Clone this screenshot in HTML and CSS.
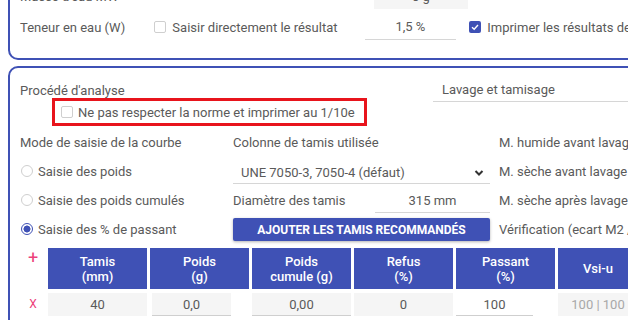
FILE: index.html
```html
<!DOCTYPE html>
<html lang="fr">
<head>
    <meta charset="UTF-8">
    <meta name="viewport" content="width=device-width, initial-scale=1.0">
    <title>Analyse granulométrique</title>
    <link rel="stylesheet" href="styles.css">
</head>
<body>
<div class="page">

    <!-- Teneur en eau -->
    <div class="card card-top">
        <div class="row-top row-first">
            <span class="top-label">Masse d'eau MW</span>
            <span class="top-gap"></span>
            <span class="field field-grey">0 g</span>
        </div>
        <div class="row-top">
            <span class="top-label">Teneur en eau (W)</span>
            <label class="check top-gap"><span class="box"></span>Saisir directement le résultat</label>
            <span class="field field-line">1,5 %</span>
            <label class="check check-print">
                <span class="box box-on">
                    <svg width="12" height="12" viewBox="0 0 12 12"><polyline points="3,6.2 5.2,8.3 9,4" fill="none" stroke="#fff" stroke-width="1.4"/></svg>
                </span>Imprimer les résultats de la teneur en eau
            </label>
        </div>
    </div>

    <!-- Procédé d'analyse -->
    <div class="card card-main">
        <div class="row-process">
            <span class="process-label">Procédé d'analyse</span>
            <span class="select select-wide">Lavage et tamisage</span>
        </div>

        <div class="highlight">
            <label class="check"><span class="box"></span>Ne pas respecter la norme et imprimer au 1/10e</label>
        </div>

        <div class="form-grid">
            <span>Mode de saisie de la courbe</span>
            <span>Colonne de tamis utilisée</span>
            <span class="side">M. humide avant lavage (M1)</span>

            <label class="radio"><span class="dot"></span>Saisie des poids</label>
            <span class="select select-col">
                UNE 7050-3, 7050-4 (défaut)
                <svg class="chevron" width="10" height="8" viewBox="0 0 10 8"><polyline points="1.5,2 5,5.5 8.5,2" fill="none" stroke="#333" stroke-width="2"/></svg>
            </span>
            <span class="side">M. sèche avant lavage (M2)</span>

            <label class="radio"><span class="dot"></span>Saisie des poids cumulés</label>
            <span class="diam">
                <span>Diamètre des tamis</span>
                <span class="field field-line field-diam">315 mm</span>
            </span>
            <span class="side">M. sèche après lavage (M3)</span>

            <label class="radio"><span class="dot dot-on"></span>Saisie des % de passant</label>
            <span class="btn-wrap"><button class="btn">AJOUTER LES TAMIS RECOMMANDÉS</button></span>
            <span class="side">Vérification (ecart M2 / M3)</span>
        </div>

        <!-- Tableau des tamis -->
        <div class="sieve-table">
            <span class="act act-add">+</span>
            <div class="th">Tamis<br>(mm)</div>
            <div class="th">Poids<br>(g)</div>
            <div class="th">Poids<br>cumule (g)</div>
            <div class="th">Refus<br>(%)</div>
            <div class="th">Passant<br>(%)</div>
            <div class="th">Vsi-u</div>

            <span class="act act-del">X</span>
            <div class="td td-grey">40</div>
            <div class="td"><span class="cell-input cell-narrow">0,0</span></div>
            <div class="td"><span class="cell-input">0,00</span></div>
            <div class="td td-grey">0</div>
            <div class="td"><span class="cell-input cell-white">100</span></div>
            <div class="td td-grey td-muted">100 | 100</div>
        </div>
    </div>

</div>
</body>
</html>
```

FILE: styles.css
```css
/* General */
* {
    margin: 0;
    padding: 0;
    box-sizing: border-box;
}
body {
    width: 628px;
    height: 320px;
    overflow: hidden;
    background: #fff;
    color: #5a5a5a;
    font-family: Roboto, "Liberation Sans", sans-serif;
    font-size: 13px;
}
.page {
    padding: 0 8px;
}

/* Cards */
.card {
    width: 720px;
    border: 2px solid #3f51b5;
    border-radius: 10px;
    white-space: nowrap;
}
.card-top {
    margin-top: -18px;
    padding: 0 0 18px 10px;
}
.card-main {
    margin-top: 6px;
    height: 300px;
    padding: 10px 0 0 10px;
}

/* Top card rows */
.row-top {
    display: flex;
    align-items: center;
    height: 26px;
}
.row-first {
    height: 25px;
    margin-bottom: 5px;
}
.top-label {
    width: 138px;
}
.top-gap {
    width: 216px;
}
.field {
    display: flex;
    align-items: center;
    justify-content: center;
    width: 94px;
    height: 100%;
}
.field-grey {
    background: #f5f5f5;
}
.field-line {
    border-bottom: 1px solid #d6d6d6;
}
.check-print {
    margin-left: 13px;
}

/* Checkboxes and radios */
.check,
.radio {
    display: flex;
    align-items: center;
    gap: 6px;
}
.box {
    display: inline-flex;
    width: 12px;
    height: 12px;
    border: 1px solid #cfcfcf;
    border-radius: 2px;
}
.box-on {
    border: none;
    background: #3f51b5;
}
.radio {
    margin-left: 1px;
    gap: 5px;
}
.dot {
    width: 12px;
    height: 12px;
    border: 1px solid #cfcfcf;
    border-radius: 50%;
}
.dot-on {
    border: 1.5px solid #3f51b5;
    background: radial-gradient(circle, #3f51b5 0 3.2px, #fff 3.8px);
}

/* Procédé row */
.row-process {
    display: flex;
    align-items: center;
    height: 24px;
}
.process-label {
    width: 423px;
}
.select {
    display: flex;
    align-items: center;
    height: 100%;
    border-bottom: 1px solid #d6d6d6;
}
.select-wide {
    width: 300px;
    padding-left: 9px;
}

/* Annotated row */
.highlight {
    display: flex;
    align-items: center;
    width: 315px;
    height: 28px;
    margin: -4px 0 0 32px;
    padding-left: 6px;
    border: 3px solid #e8141c;
}
.highlight .check {
    gap: 5px;
}

/* Form grid */
.form-grid {
    display: grid;
    grid-template-columns: 213px 257px 230px;
    grid-auto-rows: 28px;
    row-gap: 1px;
    margin-top: 2px;
    align-items: center;
}
.side {
    padding-left: 9px;
}
.select-col {
    position: relative;
    height: 24px;
    margin-top: 1px;
    padding: 2px 0 0 8px;
}
.chevron {
    position: absolute;
    right: 6px;
    top: 9px;
}
.diam {
    display: flex;
    align-items: center;
    justify-content: space-between;
    height: 100%;
}
.field-diam {
    width: 115px;
    height: 26px;
    padding-top: 1px;
}
.btn-wrap {
    display: flex;
    height: 100%;
    padding-top: 3px;
}
.btn {
    width: 257px;
    height: 23px;
    border: none;
    border-radius: 2px;
    background: #3f51b5;
    color: #fff;
    font-family: inherit;
    font-size: 12px;
    font-weight: 700;
    box-shadow: 0 1px 3px rgba(0, 0, 0, 0.3);
}

/* Sieve table */
.sieve-table {
    display: grid;
    grid-template-columns: 25px repeat(5, 99px) 80px;
    grid-template-rows: 41px 23px;
    column-gap: 3px;
    row-gap: 4px;
    margin-top: 5px;
}
.act {
    color: #ec407a;
    text-align: center;
    padding-left: 1px;
}
.act-add {
    font-size: 18px;
    line-height: 20px;
}
.act-del {
    font-size: 12px;
    line-height: 23px;
}
.th {
    display: flex;
    align-items: center;
    justify-content: center;
    background: #3f51b5;
    color: #fff;
    font-weight: 500;
    text-align: center;
    line-height: 15px;
}
.th:last-of-type {
    width: 88px;
}
.td {
    display: flex;
    align-items: center;
    justify-content: center;
}
.td-grey {
    background: #f5f5f5;
}
.td-muted {
    color: #a8a8a8;
}
.cell-input {
    display: flex;
    align-items: center;
    justify-content: center;
    width: 100%;
    height: 100%;
    background: #f5f5f5;
    border-bottom: 1px solid #cfcfcf;
}
.cell-narrow {
    width: 79px;
    margin: 0 auto 0 2px;
}
.cell-white {
    width: 77px;
    margin-right: auto;
    background: #fff;
}
```
